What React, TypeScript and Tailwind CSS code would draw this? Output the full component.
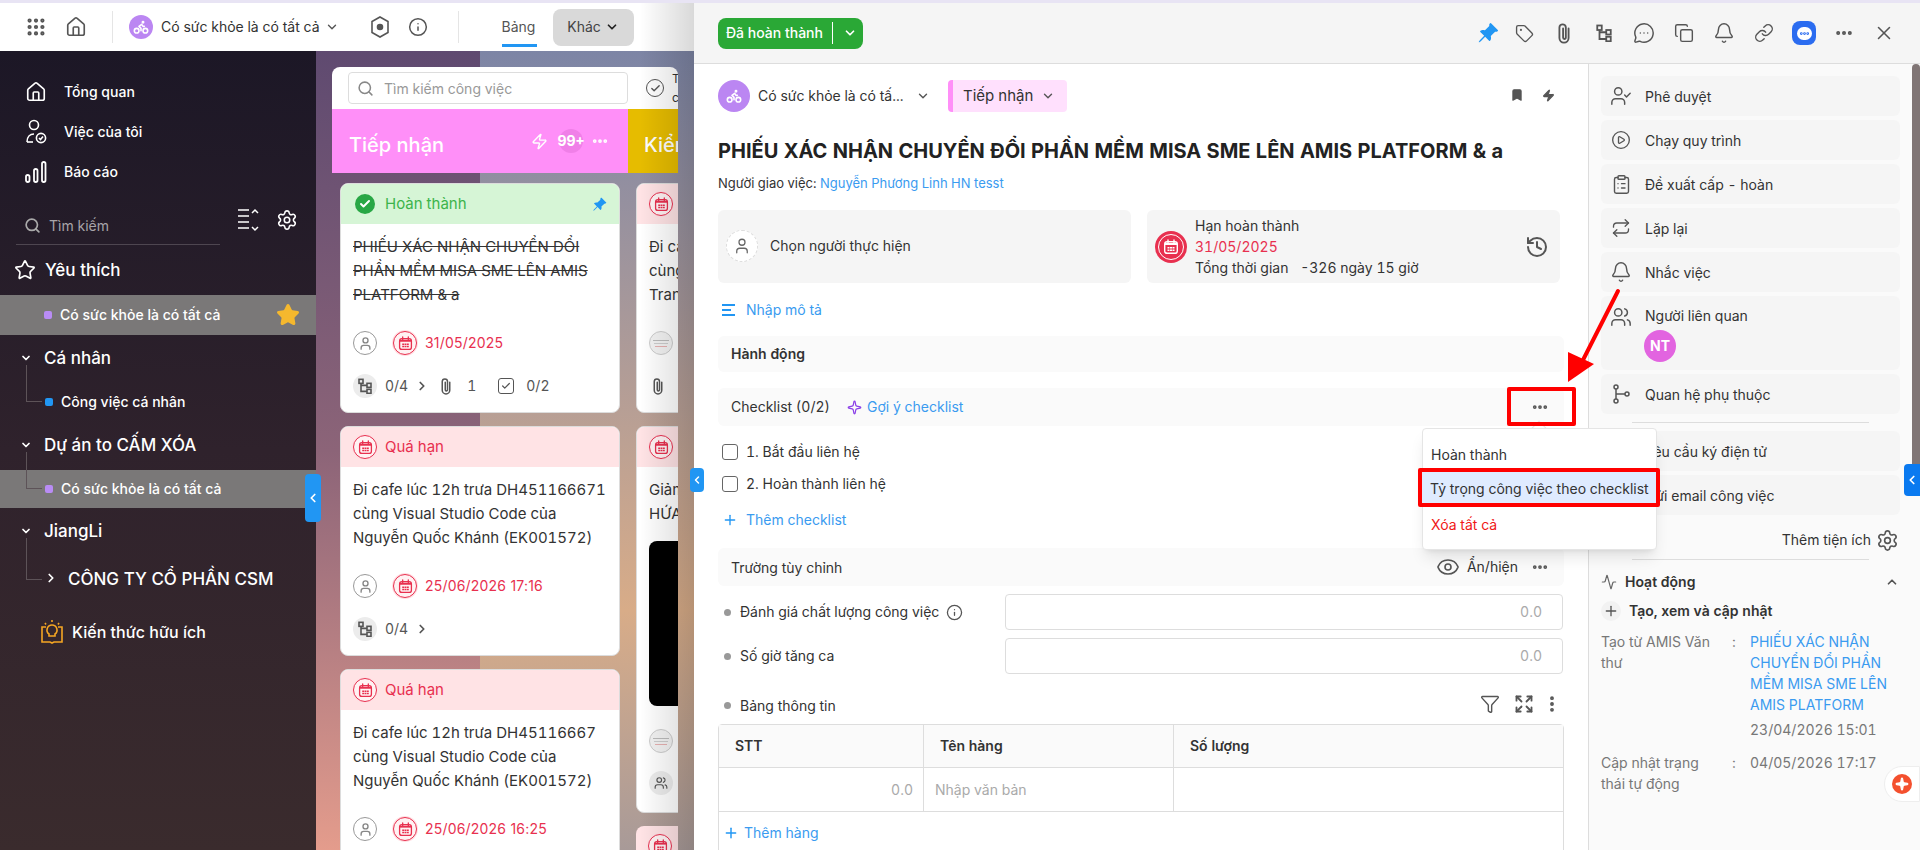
import {
  Bell, Bike, Check, ChevronDown, ChevronLeft, ChevronRight, ChevronUp, CirclePlay, ClipboardList, Copy,
  Ellipsis, EllipsisVertical, Expand, Eye, Funnel, Grip, History, House, Info, Link, Activity, MessageCircleMore,
  Plus, Repeat, Search, Settings, Sparkle, Star, Tag, User, UserCheck, Users, X, Zap, Bookmark,
} from 'lucide-react'
import { BsPinAngleFill } from 'react-icons/bs'
import type { ReactNode } from 'react'

function ProjectAvatar({ size }: { size: string }) {
  return (
    <div className={`${size} rounded-full bg-[#bb86f2] flex items-center justify-center shrink-0`}>
      <Bike size={16} color="white" strokeWidth={2.4} />
    </div>
  )
}

function CalGlyph({ size, color }: { size: number; color: string }) {
  return (
    <svg width={size} height={size} viewBox="0 0 16 16" fill="none">
      <path d="M5 1v3M11 1v3" stroke={color} strokeWidth="1.4" strokeLinecap="round" />
      <rect x="1.7" y="2.7" width="12.6" height="11.6" rx="2.4" stroke={color} strokeWidth="1.4" />
      <path d="M2 4h12v2H2z" fill={color} />
      <path d="M4.5 8h2v1.5h-2zM7 8h2v1.5H7zM9.5 8h2v1.5h-2zM4.5 10.5h2V12h-2zM7 10.5h2V12H7zM9.5 10.5h2V12h-2z" fill={color} />
    </svg>
  )
}

function CalBadge({ big }: { big?: boolean }) {
  if (big) {
    return (
      <div className="w-8 h-8 rounded-full bg-[#e8304f] flex items-center justify-center shrink-0">
        <div className="w-[26px] h-[26px] rounded-full border border-white flex items-center justify-center">
          <CalGlyph size={16} color="white" />
        </div>
      </div>
    )
  }
  return (
    <div className="w-6 h-6 rounded-full border-[1.5px] border-[#e8304f] bg-[#fff2f3] flex items-center justify-center shrink-0 shadow-[0_0_0_1px_#ffdfe3]">
      <CalGlyph size={15} color="#e8304f" />
    </div>
  )
}

function TreeIcon({ size = 16, color = '#555' }: { size?: number; color?: string }) {
  return (
    <svg width={size} height={size} viewBox="0 0 24 24" fill="none" stroke={color} strokeWidth="2.4">
      <rect x="3" y="2" width="6" height="6" />
      <rect x="15" y="8" width="6" height="6" />
      <rect x="15" y="17" width="6" height="6" />
      <path d="M6 8v12h9M6 11h9" />
    </svg>
  )
}

function GrayAvatar() {
  return (
    <div className="w-6 h-6 rounded-full border border-[#999] flex items-center justify-center shrink-0">
      <User size={15} color="#888" strokeWidth={2.2} />
    </div>
  )
}

function SketchAvatar() {
  return (
    <div className="w-6 h-6 rounded-full border border-[#ccc] bg-[#f2f2f2] flex flex-col items-center justify-center gap-[2px] shrink-0">
      <div className="w-4 h-px bg-[#bbb]" />
      <div className="w-3.5 h-px bg-[#ccc]" />
      <div className="w-3 h-px bg-[#e5b0b0]" />
    </div>
  )
}

function Clip({ size = 18, color = '#555' }: { size?: number; color?: string }) {
  return (
    <svg width={size} height={size} viewBox="0 0 24 24" fill="none" stroke={color} strokeWidth="2" strokeLinecap="round">
      <path d="M17 7v10.5a5 5 0 0 1-10 0V6a3.5 3.5 0 0 1 7 0v11a1.5 1.5 0 0 1-3 0V7" />
    </svg>
  )
}

function TaskCard({ head, lines, date, done, footer, sketch }: { head: 'done' | 'late'; lines: string[]; date: string; done?: boolean; footer: ReactNode; sketch?: boolean }) {
  return (
    <div className="w-[280px] h-[230px] shrink-0 rounded-lg bg-white border border-[#dcdcdc] overflow-hidden">
      {head === 'done' ? (
        <div className="h-[40px] bg-[#d6f5d6] flex items-center pl-[14px]">
          <div className="w-5 h-5 rounded-full bg-[#28a745] flex items-center justify-center">
            <Check size={12} color="white" strokeWidth={4} />
          </div>
          <span className="ml-[10px] text-[15px] text-[#3cb44b] flex-1">Hoàn thành</span>
          <BsPinAngleFill size={15} color="#2196f3" className="mr-3" />
        </div>
      ) : (
        <div className="h-[40px] bg-[#ffe3e5] flex items-center pl-3 gap-2">
          <CalBadge />
          <span className="text-[15px] text-[#e8304f]">Quá hạn</span>
        </div>
      )}
      <div className={`px-3 pt-[11px] h-[96px] text-[15px] leading-6 text-[#333] ${done ? 'line-through' : ''}`}>
        {lines.map((l) => <div key={l} className="whitespace-nowrap">{l}</div>)}
      </div>
      <div className="flex items-center pl-3 mt-[11px] h-6">
        {sketch ? <SketchAvatar /> : <GrayAvatar />}
        {!sketch && <div className="ml-4"><CalBadge /></div>}
        <span className="ml-2 text-sm text-[#e8304f] normal-nums tracking-[0.2px]">{date}</span>
      </div>
      <div className="flex items-center pl-3 mt-[19px] h-6 text-sm text-[#555]">{footer}</div>
    </div>
  )
}

function SubtaskCount() {
  return (
    <>
      <div className="w-6 h-6 rounded-full bg-[#ececec] flex items-center justify-center"><TreeIcon /></div>
      <span className="ml-2">0/4</span>
      <ChevronRight size={14} strokeWidth={3} className="ml-[7px]" />
    </>
  )
}

function SideLink({ icon, label }: { icon: ReactNode; label: string }) {
  return (
    <div className="h-10 flex items-center pl-6 gap-[16px] text-sm font-medium text-white">
      <div className="w-6 flex justify-center">{icon}</div>
      <span>{label}</span>
    </div>
  )
}

function TreeGroup({ label, className }: { label: string; className: string }) {
  return (
    <div className={`h-[40px] flex items-center pl-[20px] gap-[12px] text-[17px] font-medium ${className}`}>
      <ChevronDown size={12} color="white" strokeWidth={3.5} />
      <span className="pt-[2px]">{label}</span>
    </div>
  )
}

function Leaf({ color, label, active }: { color: string; label: string; active?: boolean }) {
  return (
    <div className={`relative h-[38px] mt-[5px] pl-[45px] flex items-center text-sm font-medium ${active ? 'bg-[#7a7878]' : ''}`}>
      <div className="absolute left-[26px] -top-[18px] w-[16px] h-[37px] border-l border-b border-[#5d5358]" />
      <div className={`w-2 h-2 rounded-[2px] ${color}`} />
      <span className="ml-2">{label}</span>
    </div>
  )
}

function Sidebar() {
  return (
    <div className="w-[316px] shrink-0 h-full bg-linear-to-b from-[#1c1726] via-[#2f222c] to-[#3a2b2d] text-white relative">
      <div className="pt-[21px]">
        <SideLink icon={<House size={22} color="white" strokeWidth={1.8} />} label="Tổng quan" />
        <SideLink icon={
          <svg width="24" height="26" viewBox="0 0 24 26" fill="none" stroke="white" strokeWidth="1.6">
            <circle cx="10" cy="6" r="4.5" />
            <path d="M3 23c0-5 3-8 7-8" />
            <path d="M3 23h6" />
            <circle cx="17" cy="19" r="4.6" />
            <path d="M15 19l1.5 1.5 2.5-3" />
          </svg>
        } label="Việc của tôi" />
        <SideLink icon={
          <svg width="24" height="24" viewBox="0 0 24 24" fill="none" stroke="white" strokeWidth="1.8">
            <rect x="2" y="15" width="3.5" height="7" rx="1.7" />
            <rect x="10" y="9" width="3.5" height="13" rx="1.7" />
            <rect x="18" y="2" width="3.5" height="20" rx="1.7" />
          </svg>
        } label="Báo cáo" />
      </div>
      <div className="flex items-center mt-[15px] h-[38px] pl-4">
        <div className="w-[204px] h-[38px] border-b border-[#4e4650] flex items-center pl-2 gap-2 text-sm text-[#a8a4a8]">
          <Search size={17} color="#aaa" strokeWidth={2.4} />
          <span>Tìm kiếm</span>
        </div>
        <svg className="ml-[17px] -mt-3" width="22" height="26" viewBox="0 0 22 26" fill="none" stroke="white" strokeWidth="1.5">
          <path d="M1 3h11M1 9h11M1 15h11M1 21h11M15 6l3-3 3 3M15 20l3 3 3-3" />
        </svg>
        <Settings size={22} color="white" strokeWidth={1.7} className="ml-[17px] -mt-3" />
      </div>
      <div className="h-10 mt-[5px] flex items-center pl-[14px] gap-[9px] text-[17px] font-medium">
        <Star size={22} color="white" strokeWidth={1.8} />
        <span className="pt-[2px]">Yêu thích</span>
      </div>
      <div className="h-10 mt-[5px] bg-[#7a7878] flex items-center text-sm font-medium pl-[44px] pr-4">
        <div className="w-2 h-2 rounded-[2px] bg-[#b98cf5]" />
        <span className="ml-2 flex-1">Có sức khỏe là có tất cả</span>
        <Star size={24} fill="#f5b82e" color="#f5b82e" />
      </div>
      <TreeGroup label="Cá nhân" className="mt-[3px]" />
      <Leaf color="bg-[#2196f3]" label="Công việc cá nhân" />
      <TreeGroup label="Dự án to CẤM XÓA" className="mt-[4px]" />
      <Leaf color="bg-[#b98cf5]" label="Có sức khỏe là có tất cả" active />
      <TreeGroup label="JiangLi" className="mt-[3px]" />
      <div className="relative h-[48px] pl-[44px] flex items-center text-[17px] font-medium mt-[3px]">
        <div className="absolute left-[26px] -top-[16px] w-[16px] h-[42px] border-l border-b border-[#5d5358]" />
        <ChevronRight size={14} color="white" strokeWidth={3} />
        <span className="ml-[10px] pt-[3px]">CÔNG TY CỔ PHẦN CSM</span>
      </div>
      <div className="flex items-center h-10 pl-[40px] gap-[8px] text-base font-medium mt-[10px]">
        <svg width="24" height="26" viewBox="0 0 24 26" fill="none" stroke="#f5a623" strokeWidth="1.6">
          <path d="M12 1v2M5 4l1 1.5M19 4l-1 1.5M6 8H2v15h8l2 1 2-1h8V8h-4" />
          <path d="M12 6a5 5 0 0 0-3 9v2h6v-2a5 5 0 0 0-3-9z" />
        </svg>
        <span>Kiến thức hữu ích</span>
      </div>
    </div>
  )
}

function Board() {
  return (
    <div className="flex-1 h-full relative overflow-hidden px-4 pt-4">
      <div className="absolute inset-0 flex">
        <div className="w-[164px] bg-linear-to-b from-[#5f4a70] via-[#8c6478] via-50% to-[#e49c8c]" />
        <div className="flex-1 bg-linear-to-b from-[#7d85a5] via-[#d8ac88] via-70% to-[#a89a98]" />
      </div>
      <div className="relative w-[346px]">
        <div className="h-[42px] bg-white rounded-t-lg flex items-center pl-4 overflow-hidden">
          <div className="w-[280px] h-[32px] shrink-0 border border-[#ddd] rounded flex items-center pl-2 gap-[10px] text-sm text-[#999]">
            <Search size={17} color="#888" strokeWidth={2.2} />
            <span className="pt-[2px]">Tìm kiếm công việc</span>
          </div>
          <div className="ml-[18px] w-[18px] h-[18px] shrink-0 rounded-full border-[1.5px] border-[#555] flex items-center justify-center">
            <Check size={11} color="#555" strokeWidth={3} />
          </div>
          <div className="ml-2 text-xs leading-[19px] text-[#333] shrink-0">T<br />c</div>
        </div>
        <div className="flex h-[64px] overflow-hidden text-white">
          <div className="w-[296px] shrink-0 bg-[#ff8ff8] flex items-center pl-[17px] pr-[19px]">
            <span className="text-xl flex-1 font-medium pt-[8px]">Tiếp nhận</span>
            <Zap size={17} color="white" strokeWidth={2} />
            <div className="ml-[11px] w-6 h-6 rounded-full bg-[#f07fe8] flex items-center justify-center text-sm font-bold whitespace-nowrap">99+</div>
            <Ellipsis size={18} color="white" strokeWidth={3} className="ml-[8px]" />
          </div>
          <div className="w-[50px] shrink-0 bg-[#e6bc00] flex items-center pl-4 text-xl font-medium whitespace-nowrap pt-[8px]">Kiểm tra</div>
        </div>
        <div className="flex overflow-hidden pt-[10px] pb-[40px] h-[800px]">
          <div className="w-[296px] shrink-0 px-2 flex flex-col gap-[13px]">
            <TaskCard head="done" done date="31/05/2025"
              lines={['PHIẾU XÁC NHẬN CHUYỂN ĐỔI', 'PHẦN MỀM MISA SME LÊN AMIS', 'PLATFORM & a']}
              footer={<>
                <SubtaskCount />
                <div className="ml-[8px]"><Clip /></div>
                <span className="ml-3">1</span>
                <div className="ml-[22px] w-4 h-4 rounded-[3px] border-[1.5px] border-[#555] flex items-center justify-center"><Check size={10} strokeWidth={3} /></div>
                <span className="ml-[12px]">0/2</span>
              </>} />
            <TaskCard head="late" date="25/06/2026 17:16"
              lines={['Đi cafe lúc 12h trưa DH451166671', 'cùng Visual Studio Code của', 'Nguyễn Quốc Khánh (EK001572)']}
              footer={<SubtaskCount />} />
            <TaskCard head="late" date="25/06/2026 16:25"
              lines={['Đi cafe lúc 12h trưa DH45116667', 'cùng Visual Studio Code của', 'Nguyễn Quốc Khánh (EK001572)']}
              footer={<SubtaskCount />} />
          </div>
          <div className="w-[296px] shrink-0 px-2 flex flex-col gap-[13px]">
            <TaskCard head="late" sketch date="" lines={['Đi cafe lúc 12h trưa', 'cùng Visual Studio', 'Trang']}
              footer={<Clip />} />
            <div className="w-[280px] h-[387px] shrink-0 rounded-lg bg-white border border-[#dcdcdc] overflow-hidden">
              <div className="h-[40px] bg-[#ffe3e5] flex items-center pl-3"><CalBadge /></div>
              <div className="px-3 pt-[11px] text-[15px] leading-6 text-[#333]">
                <div>Giảm giá</div>
                <div>HỨA</div>
              </div>
              <div className="mx-3 mt-[15px] h-[165px] bg-black rounded-lg" />
              <div className="pl-3 mt-[23px]"><SketchAvatar /></div>
              <div className="ml-3 mt-[18px] w-6 h-6 rounded-full bg-[#ececec] flex items-center justify-center"><Users size={14} color="#555" /></div>
            </div>
            <div className="w-[280px] h-[40px] shrink-0 rounded-t-lg bg-[#ffe3e5] flex items-center pl-3"><CalBadge /></div>
          </div>
        </div>
      </div>
    </div>
  )
}

function TopBar() {
  return (
    <div className="h-[48px] bg-white flex items-center text-sm text-[#333] pl-[25px]">
      <Grip size={22} color="#555" strokeWidth={2.6} />
      <House size={22} color="#555" strokeWidth={1.8} className="ml-[18px]" />
      <div className="w-px h-8 bg-[#e5e5e5] ml-[25px]" />
      <div className="ml-[16px]"><ProjectAvatar size="w-6 h-6" /></div>
      <span className="ml-2">Có sức khỏe là có tất cả</span>
      <ChevronDown size={14} className="ml-[5px]" color="#555" strokeWidth={2.4} />
      <svg className="ml-[31px]" width="20" height="22" viewBox="0 0 20 22" fill="none" stroke="#555" strokeWidth="1.6">
        <path d="M10 1l8 4.5v11L10 21l-8-4.5v-11z" />
        <circle cx="10" cy="11" r="2.5" fill="#555" />
      </svg>
      <Info size={20} color="#555" strokeWidth={1.8} className="ml-[18px]" />
      <div className="w-px h-8 bg-[#e5e5e5] ml-[30px]" />
      <div className="ml-[43px] relative text-[#555] h-[48px] w-[35px] flex items-center">
        <span>Bảng</span>
        <div className="absolute left-0 right-0 bottom-1 h-[3px] bg-[#2196f3]" />
      </div>
      <div className="ml-4 w-[81px] h-[37px] rounded-lg bg-[#d9d9d9] flex items-center justify-center gap-1 text-[#444]">
        Khác <ChevronDown size={14} strokeWidth={3} color="#222" />
      </div>
    </div>
  )
}

const sideItems = [
  { label: 'Phê duyệt', icon: <UserCheck size={22} strokeWidth={1.6} /> },
  { label: 'Chạy quy trình', icon: <CirclePlay size={20} strokeWidth={1.6} /> },
  { label: 'Đề xuất cấp\u00a0-\u00a0hoàn', icon: <ClipboardList size={21} strokeWidth={1.6} /> },
  { label: 'Lặp lại', icon: <Repeat size={20} strokeWidth={1.6} /> },
  { label: 'Nhắc việc', icon: <Bell size={22} strokeWidth={1.6} /> },
]

function SideBlock({ icon, label }: { icon: ReactNode; label: string }) {
  return (
    <div className="h-10 rounded-md bg-[#f5f5f5] flex items-center pl-2 text-sm text-[#333]">
      <div className="w-6 flex justify-center text-[#555]">{icon}</div>
      <span className="ml-[12px] pt-[2px]">{label}</span>
    </div>
  )
}

function RightPane() {
  return (
    <div className="w-[332px] shrink-0 h-full bg-[#fafafa] border-l border-[#ddd] relative pl-3 pr-5 pt-[12px]">
      <div className="absolute right-0 top-0 w-2 h-[400px] bg-[#807575] rounded-t" />
      <div className="flex flex-col gap-1">
        {sideItems.map((s) => <SideBlock key={s.label} icon={s.icon} label={s.label} />)}
        <div className="h-[74px] rounded-md bg-[#f5f5f5] flex pl-2 pt-[10px] text-sm text-[#333]">
          <div className="w-6 flex justify-center text-[#555] h-6"><Users size={22} strokeWidth={1.6} /></div>
          <div className="ml-[12px]">
            <div className="h-5 leading-5">Người liên quan</div>
            <div className="w-8 h-8 mt-[4px] -ml-px rounded-full bg-[#e264e0] text-white font-bold flex items-center justify-center">NT</div>
          </div>
        </div>
        <SideBlock label="Quan hệ phụ thuộc" icon={
          <svg width="20" height="20" viewBox="0 0 20 20" fill="none" stroke="#555" strokeWidth="1.5">
            <circle cx="5" cy="3" r="2" /><circle cx="5" cy="17" r="2" /><circle cx="16" cy="10" r="2" />
            <path d="M5 5v10M5 10h9" />
          </svg>
        } />
      </div>
      <div className="h-px bg-[#ddd] mx-[31px] mt-2" />
      <div className="flex flex-col gap-1 mt-2">
        <SideBlock label="Yêu cầu ký điện tử" icon={null} />
        <SideBlock label="Gửi email công việc" icon={null} />
      </div>
      <div className="flex items-center justify-end h-6 mt-[13px] text-sm text-[#333] pr-[1px]">
        Thêm tiện ích
        <Settings size={23} color="#555" strokeWidth={1.7} className="ml-[5px]" />
      </div>
      <div className="h-px bg-[#ddd] mx-[31px] mt-[7px]" />
      <div className="flex items-center h-6 mt-[10px] text-sm font-semibold text-[#333]">
        <Activity size={16} color="#666" strokeWidth={1.8} />
        <span className="ml-2 flex-1">Hoạt động</span>
        <ChevronUp size={14} color="#555" strokeWidth={3} className="mr-[1px]" />
      </div>
      <div className="flex items-center mt-[7px] text-sm font-semibold text-[#333]">
        <div className="w-5 h-5 rounded-full bg-[#f2f2f2] flex items-center justify-center"><Plus size={16} color="#555" strokeWidth={2} /></div>
        <span className="ml-2">Tạo, xem và cập nhật</span>
      </div>
      <div className="flex mt-[10px] text-sm leading-[21px]">
        <div className="w-[131px] text-[#777] pr-2">Tạo từ AMIS Văn thư</div>
        <div className="w-[18px] text-[#777]">:</div>
        <div className="w-[145px]">
          <div className="text-[#3a9bf0]">PHIẾU XÁC NHẬN CHUYỂN ĐỔI PHẦN MỀM MISA SME LÊN AMIS PLATFORM</div>
          <div className="text-[#777] mt-1">23/04/2026 15:01</div>
        </div>
      </div>
      <div className="flex mt-[12px] text-sm leading-[21px]">
        <div className="w-[131px] text-[#777] pr-2">Cập nhật trạng thái tự động</div>
        <div className="w-[18px] text-[#777]">:</div>
        <div className="text-[#777]">04/05/2026 17:17</div>
      </div>
    </div>
  )
}

function SectionHead({ children, className = '' }: { children: ReactNode; className?: string }) {
  return <div className={`h-[38px] rounded-md bg-[#fafafa] flex items-center pl-[13px] text-sm text-[#333] ${className}`}>{children}</div>
}

function NumField({ label, info, className }: { label: string; info?: boolean; className: string }) {
  return (
    <div className={`flex items-center ${className}`}>
      <div className="w-[287px] flex items-center text-sm text-[#333] pl-[6px]">
        <div className="w-[7px] h-[7px] rounded-full bg-[#999]" />
        <span className="ml-[9px]">{label}</span>
        {info && <Info size={17} color="#555" strokeWidth={1.8} className="ml-[7px]" />}
      </div>
      <div className="flex-1 h-9 border border-[#ddd] rounded flex items-center justify-end pr-5 text-sm text-[#aaa] mr-px">0.0</div>
    </div>
  )
}

function MainPane() {
  return (
    <div className="flex-1 h-full bg-white px-6 overflow-hidden">
      <div className="flex items-center h-8 mt-4 text-sm text-[#333]">
        <ProjectAvatar size="w-8 h-8" />
        <span className="ml-2 w-[150px] whitespace-nowrap">Có sức khỏe là có tấ...</span>
        <ChevronDown size={14} color="#555" strokeWidth={2.4} className="ml-[8px]" />
        <div className="ml-[18px] w-[119px] h-8 rounded-[4px] border-l-[5px] border-[#ff8ff8] bg-[#ffe0fd] flex items-center pl-[10px] gap-[8px] text-[15px]">
          Tiếp nhận <ChevronDown size={14} color="#555" strokeWidth={2.4} />
        </div>
        <div className="flex-1" />
        <Bookmark size={14} fill="#555" color="#555" className="-mt-[2px]" />
        <Zap size={13} fill="#555" color="#555" className="ml-[18px] mr-[9px] -mt-[2px]" />
      </div>
      <div className="h-[30px] mt-6 flex items-center text-xl font-bold text-[#222] whitespace-nowrap">PHIẾU XÁC NHẬN CHUYỂN ĐỔI PHẦN MỀM MISA SME LÊN AMIS PLATFORM &amp; a</div>
      <div className="h-[18px] mt-[9px] flex items-center text-[13px] text-[#333]">
        Người giao việc:&nbsp;<span className="text-[#3a9bf0]">Nguyễn Phương Linh HN tesst</span>
      </div>
      <div className="flex gap-4 mt-[17px]">
        <div className="w-[413px] h-[73px] rounded-md bg-[#f5f5f5] flex items-center pl-2 pb-[2px] text-sm text-[#333]">
          <div className="w-8 h-8 rounded-full bg-white border border-dashed border-[#ddd] flex items-center justify-center"><User size={18} color="#666" strokeWidth={1.7} /></div>
          <span className="ml-3">Chọn người thực hiện</span>
        </div>
        <div className="w-[413px] h-[73px] rounded-md bg-[#f5f5f5] flex items-center pl-2 pr-3 text-sm text-[#333]">
          <CalBadge big />
          <div className="ml-2 flex-1 leading-[21px]">
            <div>Hạn hoàn thành</div>
            <div className="text-[#e8304f]">31/05/2025</div>
            <div>Tổng thời gian <span className="ml-[8px]">-326 ngày 15 giờ</span></div>
          </div>
          <History size={24} color="#555" strokeWidth={2} className="-mr-[1px]" />
        </div>
      </div>
      <div className="h-5 mt-[17px] flex items-center text-sm text-[#3a9bf0] pl-1">
        <svg width="14" height="12" viewBox="0 0 14 12" fill="#2196f3"><rect width="13" height="2" /><rect y="5" width="9" height="2" /><rect y="10" width="13" height="2" /></svg>
        <span className="ml-[10px]">Nhập mô tả</span>
      </div>
      <SectionHead className="!h-9 mt-4 font-semibold">Hành động</SectionHead>
      <SectionHead className="mt-4 relative">
        <span>Checklist (0/2)</span>
        <Sparkle size={15} color="#8b3fe8" strokeWidth={2} className="ml-[17px]" />
        <span className="ml-[5px] text-[#3a9bf0]">Gợi ý checklist</span>
        <Ellipsis size={18} color="#555" strokeWidth={3} className="absolute right-[15px] top-[10px]" />
      </SectionHead>
      <div className="mt-[10px] text-sm text-[#333]">
        <div className="h-8 flex items-center pl-1"><div className="w-4 h-4 border border-[#666] rounded-[3px]" /><span className="ml-[8px]">1. Bắt đầu liên hệ</span></div>
        <div className="h-8 flex items-center pl-1"><div className="w-4 h-4 border border-[#666] rounded-[3px]" /><span className="ml-[8px]">2. Hoàn thành liên hệ</span></div>
      </div>
      <div className="h-6 mt-[8px] flex items-center text-sm text-[#3a9bf0] pl-1">
        <Plus size={16} color="#2196f3" strokeWidth={2} />
        <span className="ml-2">Thêm checklist</span>
      </div>
      <SectionHead className="mt-[16px]">
        <span className="flex-1 pt-[2px]">Trường tùy chỉnh</span>
        <Eye size={24} color="#555" strokeWidth={1.6} />
        <span className="ml-[7px]">Ẩn/hiện</span>
        <Ellipsis size={18} color="#555" strokeWidth={3} className="ml-[13px] mr-[15px]" />
      </SectionHead>
      <NumField label="Đánh giá chất lượng công việc" info className="mt-2" />
      <NumField label="Số giờ tăng ca" className="mt-2" />
      <div className="h-6 mt-[19px] flex items-center text-sm text-[#333] pl-[6px]">
        <div className="w-[7px] h-[7px] rounded-full bg-[#999]" />
        <span className="ml-[9px] flex-1 pt-[2px]">Bảng thông tin</span>
        <Funnel size={20} color="#555" strokeWidth={1.7} className="-mt-[3px]" />
        <Expand size={20} color="#555" strokeWidth={2.2} className="ml-[14px] -mt-[3px]" />
        <EllipsisVertical size={20} color="#555" strokeWidth={2.6} className="ml-[8px] mr-[2px] -mt-[3px]" />
      </div>
      <div className="mt-[7px] border border-[#ddd] rounded-t text-sm">
        <div className="flex h-[43px] bg-[#fafafa] font-semibold text-[#333] border-b border-[#ddd]">
          <div className="w-[205px] border-r border-[#ddd] flex items-center pl-[16px]">STT</div>
          <div className="w-[250px] border-r border-[#ddd] flex items-center pl-[16px]">Tên hàng</div>
          <div className="flex-1 flex items-center pl-[16px]">Số lượng</div>
        </div>
        <div className="flex h-[44px] text-[#aaa] border-b border-[#ddd]">
          <div className="w-[205px] border-r border-[#ddd] flex items-center justify-end pr-[10px]">0.0</div>
          <div className="w-[250px] border-r border-[#ddd] flex items-center pl-[11px]">Nhập văn bản</div>
        </div>
        <div className="h-[40px] flex items-center pl-[4px] pt-[2px] text-[#3a9bf0]">
          <Plus size={16} color="#2196f3" strokeWidth={2.2} />
          <span className="ml-[5px]">Thêm hàng</span>
        </div>
      </div>
    </div>
  )
}

function HeadIcon({ children, className = '' }: { children: ReactNode; className?: string }) {
  return <div className={`w-10 h-10 flex items-center justify-center ${className}`}>{children}</div>
}

function DetailPanel() {
  return (
    <div className="w-[1226px] shrink-0 h-full flex flex-col">
      <div className="h-[61px] bg-[#f5f5f5] border-b border-[#ddd] flex items-center pl-6 pr-4 shrink-0">
        <div className="w-[145px] h-[31px] rounded-lg bg-[#2aa836] flex items-center text-white text-sm font-medium pl-2">
          <span>Đã hoàn thành</span>
          <div className="w-px h-[22px] bg-white ml-[9px]" />
          <ChevronDown size={14} strokeWidth={3} className="ml-[10px]" />
        </div>
        <div className="flex-1" />
        <div className="flex items-center text-[#555]">
          <HeadIcon><BsPinAngleFill size={22} color="#2196f3" /></HeadIcon>
          <HeadIcon className="-ml-1"><Tag size={19} strokeWidth={1.7} /></HeadIcon>
          <HeadIcon><Clip size={22} /></HeadIcon>
          <HeadIcon><TreeIcon size={18} /></HeadIcon>
          <HeadIcon><MessageCircleMore size={22} strokeWidth={1.6} /></HeadIcon>
          <HeadIcon><Copy size={20} strokeWidth={1.7} /></HeadIcon>
          <HeadIcon><Bell size={22} strokeWidth={1.6} /></HeadIcon>
          <HeadIcon><Link size={20} strokeWidth={1.7} /></HeadIcon>
          <HeadIcon>
            <div className="w-6 h-6 rounded-lg bg-[#2b6cf0] flex items-center justify-center">
              <div className="w-[15px] h-[13px] rounded-full bg-white flex items-center justify-center"><Ellipsis size={11} color="#2b6cf0" strokeWidth={4} /></div>
            </div>
          </HeadIcon>
          <HeadIcon><Ellipsis size={20} strokeWidth={2.8} /></HeadIcon>
          <HeadIcon><X size={22} strokeWidth={1.7} /></HeadIcon>
        </div>
      </div>
      <div className="flex-1 flex min-h-0">
        <MainPane />
        <RightPane />
      </div>
    </div>
  )
}

export default function App() {
  return (
    <div className="relative w-[1920px] h-[850px] overflow-hidden font-['Inter',sans-serif] tabular-nums">
      <div className="h-[3px] bg-[#e8e4f4]" />
      <div className="flex h-[847px]">
        <div className="w-[694px] shrink-0 h-full flex flex-col relative">
          <TopBar />
          <div className="flex-1 flex min-h-0">
            <Sidebar />
            <Board />
          </div>
          <div className="absolute right-0 top-0 bottom-0 w-[54px] bg-linear-to-r from-transparent to-black/15" />
        </div>
        <DetailPanel />
      </div>

      <button className="absolute left-[305px] top-[474px] w-4 h-12 rounded bg-[#2196f3] flex items-center justify-center">
        <ChevronLeft size={14} color="white" strokeWidth={3} />
      </button>
      <button className="absolute left-[690px] top-[468px] w-[14px] h-6 rounded bg-[#2196f3] flex items-center justify-center">
        <ChevronLeft size={12} color="white" strokeWidth={3} />
      </button>
      <button className="absolute right-0 top-[464px] w-4 h-8 rounded-l bg-[#0a7af0] flex items-center justify-center">
        <ChevronLeft size={14} color="white" strokeWidth={3} />
      </button>
      <div className="absolute right-0 top-[766px] w-9 h-9 rounded-l-full bg-white border border-[#eee] flex items-center justify-center">
        <div className="w-5 h-5 rounded-full bg-[#f4502e] flex items-center justify-center">
          <Sparkle size={14} color="white" fill="white" />
        </div>
      </div>

      <div className="absolute left-[1533px] top-[423px] w-3 h-3 rotate-45 bg-white border-l border-t border-[#e5e5e5]" />
      <div className="absolute left-[1422px] top-[428px] w-[235px] h-[122px] pt-px rounded bg-white border border-[#e5e5e5] shadow-lg flex flex-col justify-center text-sm text-[#333]">
        <div className="h-9 flex items-center pl-2">Hoàn thành</div>
        <div className="h-[34px]" />
        <div className="h-9 flex items-center pl-2 text-[#f01818]">Xóa tất cả</div>
      </div>
      <div className="absolute left-[1418px] top-[468px] w-[242px] h-[39px] pt-[2px] border-[4px] border-[#f00] rounded-[2px] bg-[#dfebff] flex items-center pl-2 text-sm text-[#333] whitespace-nowrap">
        Tỷ trọng công việc theo checklist
      </div>
      <div className="absolute left-[1507px] top-[387px] w-[69px] h-[39px] border-[4px] border-[#f00] rounded-[2px]" />
      <svg className="absolute left-[1560px] top-[285px]" width="70" height="105" viewBox="0 0 70 105">
        <path d="M58 6L23 75" stroke="#f00" strokeWidth="4" strokeLinecap="round" />
        <path d="M8 97V67L34 79z" fill="#f00" />
      </svg>
    </div>
  )
}
